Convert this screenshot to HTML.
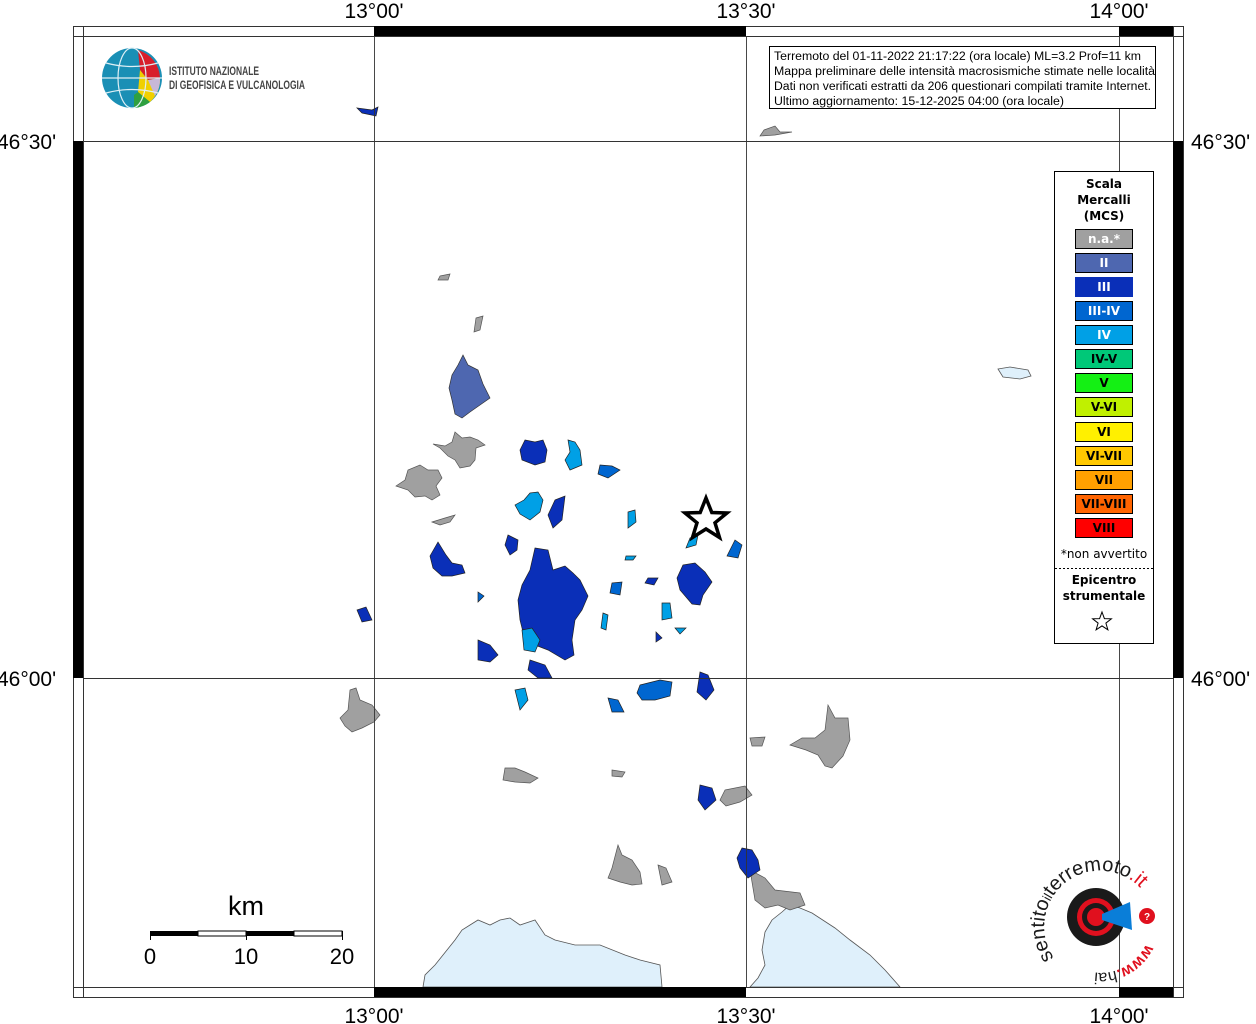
<!DOCTYPE html>
<html><head><meta charset="utf-8"><style>
html,body{margin:0;padding:0;background:#fff;width:1256px;height:1024px;overflow:hidden}
svg{display:block}
</style></head><body>
<svg width="1256" height="1024" viewBox="0 0 1256 1024" xmlns="http://www.w3.org/2000/svg" font-family="Liberation Sans, DejaVu Sans, sans-serif">
<rect width="1256" height="1024" fill="#fff"/>
<!-- sea -->
<path d="M423,987 L425,975 L435,965 L447,950 L455,940 L462,930 L470,925 L478,920 L490,925 L500,920 L510,918 L520,925 L535,920 L545,935 L555,940 L575,945 L600,945 L625,955 L640,960 L660,965 L662,987 Z" fill="#dff0fb" stroke="#555" stroke-width="0.8"/>
<path d="M750,987 L758,978 L765,965 L762,950 L765,932 L772,920 L782,912 L790,905 L800,908 L812,913 L835,928 L850,940 L870,955 L885,970 L900,987 Z" fill="#dff0fb" stroke="#555" stroke-width="0.8"/>
<path d="M998,369 L1010,367 L1028,370 L1031,376 L1020,379 L1003,377 Z" fill="#dff0fb" stroke="#555" stroke-width="0.8"/>
<!-- gray blobs -->
<g fill="#a0a0a0" stroke="#555" stroke-width="0.7">
<path d="M455,432 L462,438 L470,437 L478,440 L485,445 L476,448 L475,460 L470,466 L460,468 L455,460 L448,456 L440,448 L433,444 L445,446 L452,442 Z"/>
<path d="M420,465 L428,470 L438,470 L442,478 L436,486 L440,495 L432,500 L425,496 L415,497 L408,490 L396,486 L405,480 L408,470 Z"/>
<path d="M432,522 L445,518 L455,515 L450,522 L440,525 Z"/>
<path d="M350,690 L356,688 L360,700 L372,705 L380,715 L374,722 L362,728 L352,732 L345,726 L340,718 L348,710 Z"/>
<path d="M505,768 L515,768 L525,772 L538,778 L530,783 L515,782 L503,780 Z"/>
<path d="M612,770 L625,772 L622,777 L612,776 Z"/>
<path d="M750,738 L765,737 L762,746 L752,746 Z"/>
<path d="M828,705 L835,718 L848,718 L850,740 L843,756 L832,768 L825,766 L818,755 L806,750 L790,745 L802,738 L815,738 L825,730 Z"/>
<path d="M725,790 L745,786 L752,795 L740,802 L726,806 L720,800 Z"/>
<path d="M618,845 L622,855 L632,860 L640,872 L642,884 L632,885 L620,882 L608,878 L612,868 Z"/>
<path d="M658,865 L666,868 L672,882 L662,885 Z"/>
<path d="M750,870 L765,878 L775,890 L800,893 L805,905 L790,910 L778,905 L765,908 L755,900 Z"/>
<path d="M440,276 L450,274 L448,280 L438,280 Z"/>
<path d="M476,318 L483,316 L480,330 L474,332 Z"/>
<path d="M764,130 L775,126 L780,132 L792,132 L775,135 L760,136 Z"/>
</g>
<!-- II -->
<path d="M463,355 L468,365 L478,370 L483,384 L490,398 L480,405 L470,412 L462,418 L455,414 L452,400 L449,388 L452,375 L458,365 Z" fill="#4e67b0" stroke="#333" stroke-width="0.7"/>
<!-- III -->
<g fill="#0a2fb8" stroke="#222" stroke-width="0.7">
<path d="M525,440 L535,442 L543,440 L547,450 L545,462 L535,465 L522,460 L520,450 Z"/>
<path d="M438,542 L446,555 L452,563 L462,565 L465,573 L452,576 L442,576 L433,568 L430,556 Z"/>
<path d="M535,548 L548,550 L553,570 L565,566 L573,573 L580,580 L588,596 L582,610 L575,620 L572,640 L574,655 L565,660 L548,650 L535,645 L525,640 L520,620 L518,600 L522,585 L530,570 Z"/>
<path d="M508,535 L518,540 L517,550 L510,555 L505,545 Z"/>
<path d="M555,500 L565,496 L562,520 L553,528 L548,515 Z"/>
<path d="M478,640 L490,645 L498,655 L490,662 L478,660 Z"/>
<path d="M530,660 L545,665 L552,678 L538,678 L528,670 Z"/>
<path d="M683,565 L695,563 L705,572 L712,582 L703,595 L700,605 L692,604 L680,590 L677,578 Z"/>
<path d="M700,672 L708,675 L714,690 L706,700 L697,692 Z"/>
<path d="M700,785 L712,788 L716,800 L705,810 L698,800 Z"/>
<path d="M742,848 L752,850 L758,860 L760,870 L748,878 L740,868 L737,858 Z"/>
<path d="M357,108 L372,110 L378,107 L376,116 L362,113 Z"/>
<path d="M357,610 L366,607 L372,620 L362,622 Z"/>
<path d="M648,578 L658,578 L654,585 L645,583 Z"/>
<path d="M656,632 L662,638 L656,642 Z"/>
</g>
<!-- III-IV -->
<g fill="#0066d0" stroke="#222" stroke-width="0.7">
<path d="M640,685 L660,680 L672,682 L670,696 L655,700 L642,700 L637,693 Z"/>
<path d="M608,698 L618,700 L624,712 L612,712 Z"/>
<path d="M600,465 L612,466 L620,470 L608,478 L598,474 Z"/>
<path d="M735,540 L742,545 L738,558 L727,556 Z"/>
<path d="M612,583 L622,582 L620,595 L610,593 Z"/>
<path d="M478,592 L484,596 L478,602 Z"/>
</g>
<!-- IV -->
<g fill="#00a0e6" stroke="#222" stroke-width="0.7">
<path d="M530,493 L538,492 L543,500 L540,512 L530,520 L520,514 L515,505 L524,500 Z"/>
<path d="M568,440 L575,442 L580,450 L582,465 L570,470 L565,460 L570,452 Z"/>
<path d="M522,630 L532,628 L540,640 L535,652 L524,650 Z"/>
<path d="M515,690 L525,688 L528,700 L520,710 Z"/>
<path d="M628,512 L635,510 L636,522 L628,528 Z"/>
<path d="M662,603 L670,603 L672,618 L662,620 Z"/>
<path d="M603,613 L608,615 L606,630 L601,628 Z"/>
<path d="M626,556 L636,556 L633,560 L625,560 Z"/>
<path d="M675,628 L686,628 L680,634 Z"/>
<path d="M690,538 L698,535 L696,545 L686,548 Z"/>
</g>
<!-- grid -->
<g stroke="#333" stroke-width="0.9" fill="none">
<line x1="374.5" y1="36" x2="374.5" y2="987"/>
<line x1="746.5" y1="36" x2="746.5" y2="987"/>
<line x1="1119.5" y1="36" x2="1119.5" y2="987"/>
<line x1="83" y1="141.5" x2="1173" y2="141.5"/>
<line x1="83" y1="678.5" x2="1173" y2="678.5"/>
</g>
<!-- frame -->
<rect x="73.5" y="26.5" width="1110" height="971" fill="none" stroke="#333" stroke-width="1"/>
<rect x="83.5" y="36.5" width="1090" height="951" fill="none" stroke="#333" stroke-width="1"/>
<g fill="#000">
<rect x="374" y="26" width="372" height="10"/>
<rect x="1119" y="26" width="54" height="10"/>
<rect x="374" y="987" width="372" height="10"/>
<rect x="1119" y="987" width="54" height="10"/>
<rect x="73" y="141" width="10" height="537"/>
<rect x="1173" y="141" width="10" height="537"/>
</g>
<g stroke="#333" stroke-width="1">
<line x1="73" y1="36.5" x2="83" y2="36.5"/>
<line x1="73" y1="987.5" x2="83" y2="987.5"/>
<line x1="1173" y1="36.5" x2="1183" y2="36.5"/>
<line x1="1173" y1="987.5" x2="1183" y2="987.5"/>
<line x1="83.5" y1="26" x2="83.5" y2="36"/>
<line x1="1173.5" y1="26" x2="1173.5" y2="36"/>
<line x1="83.5" y1="987" x2="83.5" y2="997"/>
<line x1="1173.5" y1="987" x2="1173.5" y2="997"/>
</g>
<!-- labels -->
<g font-size="21" fill="#000" text-anchor="middle">
<text x="374" y="18">13°00'</text>
<text x="746" y="18">13°30'</text>
<text x="1119" y="18">14°00'</text>
<text x="374" y="1023">13°00'</text>
<text x="746" y="1023">13°30'</text>
<text x="1119" y="1023">14°00'</text>
</g>
<g font-size="21" fill="#000">
<text x="-3" y="149">46°30'</text>
<text x="-3" y="686">46°00'</text>
<text x="1191" y="149">46°30'</text>
<text x="1191" y="686">46°00'</text>
</g>
<!-- INGV logo -->
<circle cx="132" cy="78" r="30" fill="#1a8fb5"/>
<path d="M138,50 A30,30 0 0 1 160,78 L148,80 L140,70 Z" fill="#d81e2a"/>
<path d="M140,70 L148,80 L160,78 A30,30 0 0 1 150,102 L138,92 Z" fill="#f0d000"/>
<path d="M138,92 L150,102 A30,30 0 0 1 134,108 L134,95 Z" fill="#2fa040"/>
<path d="M148,80 L160,78 A30,30 0 0 1 155,96 Z" fill="#c8b8d8"/>
<g stroke="#dfeff5" stroke-width="1.2" fill="none"><ellipse cx="132" cy="78" rx="14" ry="30"/><line x1="102" y1="78" x2="162" y2="78"/><path d="M106,63 Q132,70 158,63"/><path d="M106,93 Q132,86 158,93"/></g>
<text x="169" y="75" font-size="12" font-weight="bold" fill="#444" textLength="90" lengthAdjust="spacingAndGlyphs">ISTITUTO NAZIONALE</text>
<text x="169" y="89" font-size="12" font-weight="bold" fill="#444" textLength="136" lengthAdjust="spacingAndGlyphs">DI GEOFISICA E VULCANOLOGIA</text>
<!-- info box -->
<rect x="769.5" y="46.5" width="386" height="62" fill="#fff" stroke="#000"/>
<g font-size="11.5" fill="#000" lengthAdjust="spacingAndGlyphs">
<text x="774" y="60" textLength="367" lengthAdjust="spacingAndGlyphs">Terremoto del 01-11-2022 21:17:22 (ora locale) ML=3.2 Prof=11 km</text>
<text x="774" y="75" textLength="381" lengthAdjust="spacingAndGlyphs">Mappa preliminare delle intensità macrosismiche stimate nelle località</text>
<text x="774" y="90" textLength="377" lengthAdjust="spacingAndGlyphs">Dati non verificati estratti da 206 questionari compilati tramite Internet.</text>
<text x="774" y="105" textLength="290" lengthAdjust="spacingAndGlyphs">Ultimo aggiornamento: 15-12-2025 04:00 (ora locale)</text>
</g>
<!-- legend -->
<rect x="1054.5" y="171.5" width="99" height="472" fill="#fff" stroke="#000"/>
<g font-family="DejaVu Sans, sans-serif" font-weight="bold" font-size="12" text-anchor="middle" fill="#000">
<text x="1104" y="188">Scala</text>
<text x="1104" y="204">Mercalli</text>
<text x="1104" y="220">(MCS)</text>
</g>
<g stroke="#000" stroke-width="1">
<rect x="1075.5" y="229.5" width="57" height="19" fill="#a0a0a0"/>
<rect x="1075.5" y="253.5" width="57" height="19" fill="#4e67b0"/>
<rect x="1075.5" y="277.5" width="57" height="19" fill="#0a2fb8" stroke="#0a2fb8"/>
<rect x="1075.5" y="301.5" width="57" height="19" fill="#0066d0"/>
<rect x="1075.5" y="325.5" width="57" height="19" fill="#00a0e6"/>
<rect x="1075.5" y="349.5" width="57" height="19" fill="#00c878"/>
<rect x="1075.5" y="373.5" width="57" height="19" fill="#14f014"/>
<rect x="1075.5" y="397.5" width="57" height="19" fill="#c0f000"/>
<rect x="1075.5" y="422.5" width="57" height="19" fill="#fff000"/>
<rect x="1075.5" y="446.5" width="57" height="19" fill="#ffc800"/>
<rect x="1075.5" y="470.5" width="57" height="19" fill="#ffa000"/>
<rect x="1075.5" y="494.5" width="57" height="19" fill="#ff6400"/>
<rect x="1075.5" y="518.5" width="57" height="19" fill="#ff0000"/>
</g>
<g font-family="DejaVu Sans, sans-serif" font-weight="bold" font-size="12" text-anchor="middle">
<text x="1104" y="243" fill="#fff">n.a.*</text>
<text x="1104" y="267" fill="#fff">II</text>
<text x="1104" y="291" fill="#fff">III</text>
<text x="1104" y="315" fill="#fff">III-IV</text>
<text x="1104" y="339" fill="#fff">IV</text>
<text x="1104" y="363" fill="#000">IV-V</text>
<text x="1104" y="387" fill="#000">V</text>
<text x="1104" y="411" fill="#000">V-VI</text>
<text x="1104" y="436" fill="#000">VI</text>
<text x="1104" y="460" fill="#000">VI-VII</text>
<text x="1104" y="484" fill="#000">VII</text>
<text x="1104" y="508" fill="#000">VII-VIII</text>
<text x="1104" y="532" fill="#000">VIII</text>
</g>
<text x="1104" y="558" font-family="DejaVu Sans, sans-serif" font-size="12" text-anchor="middle">*non avvertito</text>
<line x1="1055" y1="568.5" x2="1153" y2="568.5" stroke="#000" stroke-dasharray="2,2"/>
<g font-family="DejaVu Sans, sans-serif" font-weight="bold" font-size="12" text-anchor="middle">
<text x="1104" y="584">Epicentro</text>
<text x="1104" y="600">strumentale</text>
</g>
<polygon points="1102,612 1104.4,618.6 1111.4,618.8 1105.9,623.1 1107.9,629.8 1102,625.9 1096.1,629.8 1098.1,623.1 1092.6,618.8 1099.6,618.6" fill="#fff" stroke="#000" stroke-width="1"/>
<!-- epicentre star -->
<polygon points="706,498 711.8,512.5 727,513 715,522.8 719.5,537.5 706,529 692.5,537.5 697,522.8 685,513 700.2,512.5" fill="#fff" stroke="#000" stroke-width="3.5" stroke-linejoin="miter"/>
<!-- scale bar -->
<text x="246" y="915" font-size="27" text-anchor="middle">km</text>
<rect x="150" y="931" width="48" height="5" fill="#000"/>
<rect x="198" y="931" width="48" height="5" fill="#fff" stroke="#000" stroke-width="1"/>
<rect x="246" y="931" width="48" height="5" fill="#000"/>
<rect x="294" y="931" width="48" height="5" fill="#fff" stroke="#000" stroke-width="1"/>
<g stroke="#000" stroke-width="1"><line x1="150.5" y1="931" x2="150.5" y2="940"/><line x1="246.5" y1="931" x2="246.5" y2="940"/><line x1="342.5" y1="931" x2="342.5" y2="940"/></g>
<g font-size="22" text-anchor="middle"><text x="150" y="964">0</text><text x="246" y="964">10</text><text x="342" y="964">20</text></g>
<!-- hai sentito logo -->
<circle cx="1096" cy="917" r="29" fill="#1a1a1a"/>
<circle cx="1096" cy="917" r="19" fill="#e0101e"/>
<circle cx="1096" cy="917" r="14" fill="#1a1a1a"/>
<circle cx="1096" cy="917" r="9" fill="#e0101e"/>
<path d="M1102,914 L1130,902 L1132,930 L1102,920 Z" fill="#0a7ed8"/>
<circle cx="1147" cy="916" r="8" fill="#e0101e"/>
<text x="1147" y="920" font-size="10" font-weight="bold" fill="#fff" text-anchor="middle">?</text>
<defs><path id="arc" d="M1054,958 A47,47 0 1 1 1146,895"/><path id="arc2" d="M1146,944 A50,50 0 0 1 1092,972"/></defs>
<text font-size="20" font-family="Liberation Sans, sans-serif" fill="#1a1a1a"><textPath href="#arc">sentito<tspan font-size="13">il</tspan>terremoto<tspan fill="#e0101e">.it</tspan></textPath></text>
<text font-size="16" font-weight="bold" fill="#e0101e"><textPath href="#arc2">www.<tspan fill="#1a1a1a" font-weight="normal">hai</tspan></textPath></text>
</svg>
</body></html>
